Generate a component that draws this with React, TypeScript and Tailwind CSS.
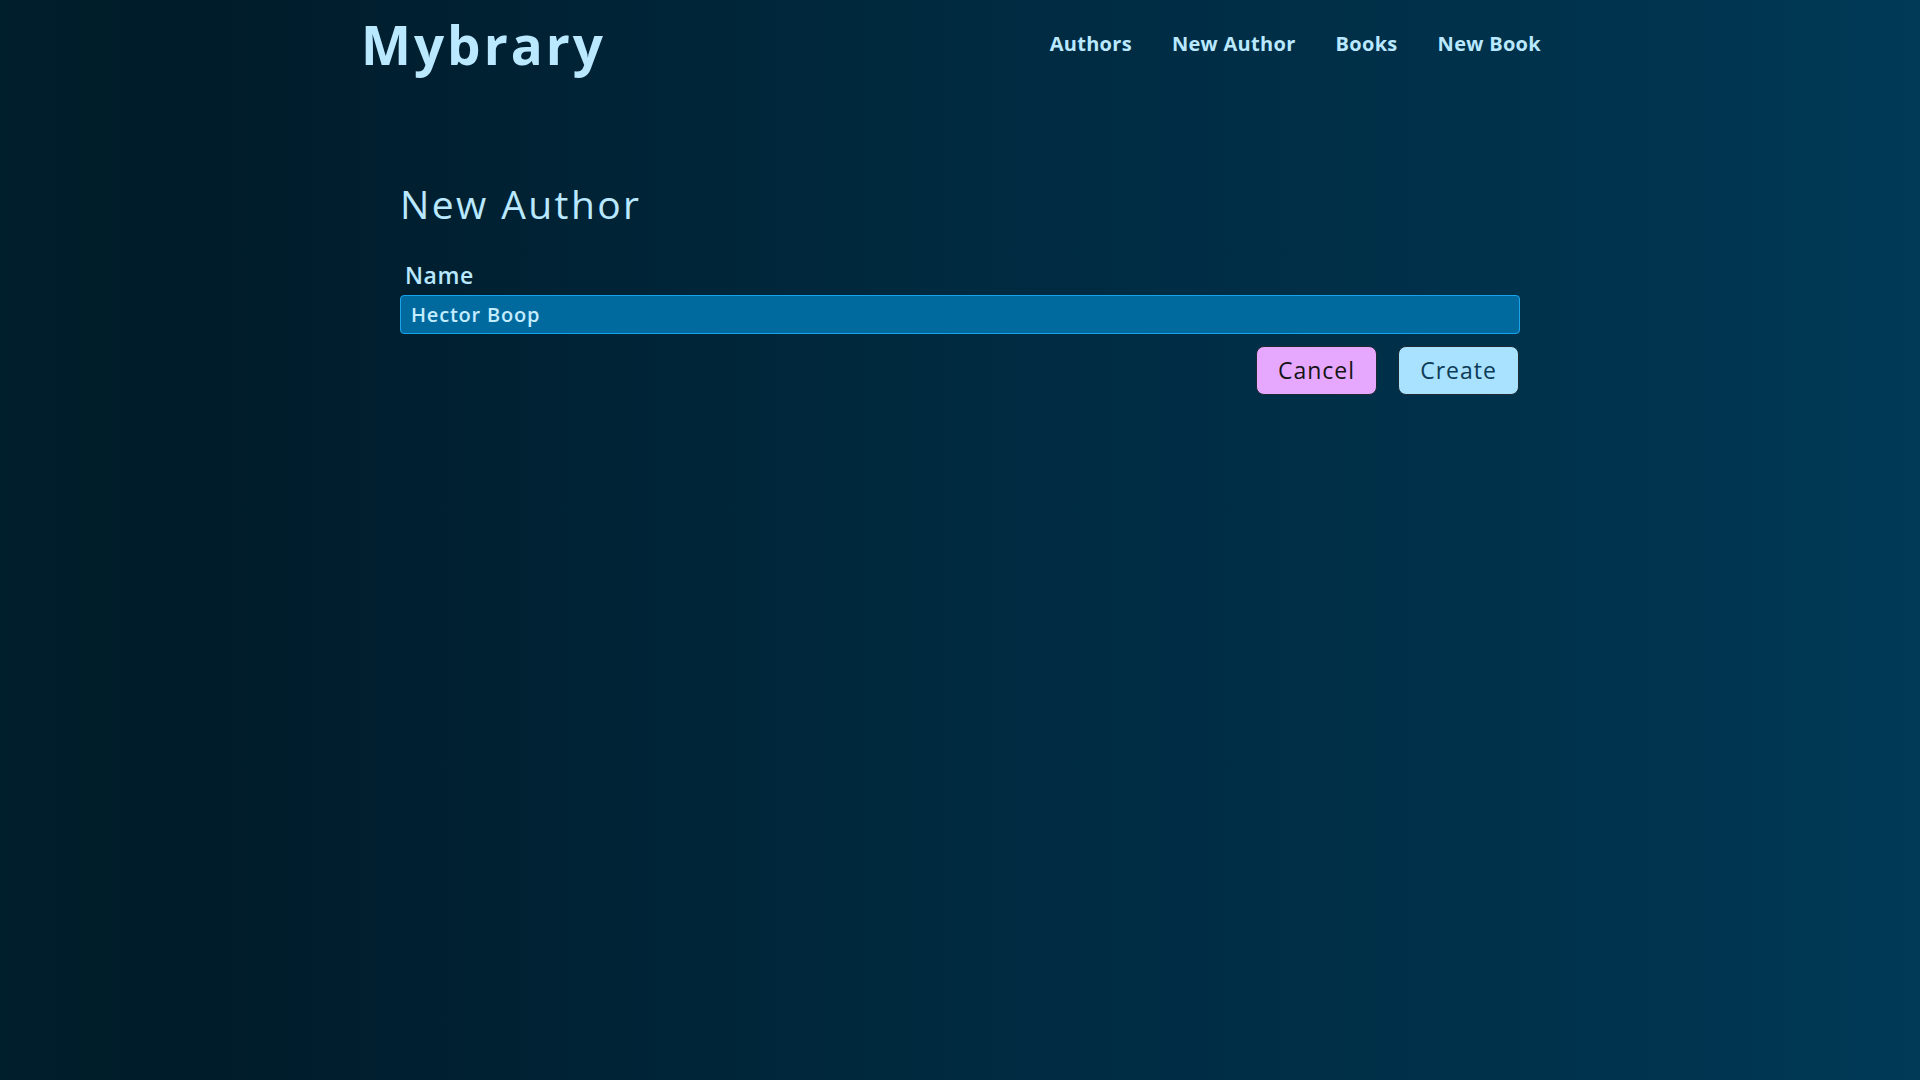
import React from "react";

const links = ["Authors", "New Author", "Books", "New Book"];

const App: React.FC = () => {
  return (
    <div
      className="min-h-screen w-full bg-[linear-gradient(to_right,#001f2c_0%,#001b29_9%,#002a40_50%,#00344f_88%,#003a57_100%)] text-[#b9e8ff]"
      style={{ fontFamily: '"Open Sans", "Noto Sans", sans-serif' }}
    >
      <header className="w-[1190px] mx-auto flex justify-between items-start pt-[10px]">
        <a href="#" className="-ml-[4px] text-[53px] font-bold leading-[70px] tracking-[3px] no-underline">
          Mybrary
        </a>
        <nav className="flex gap-[40px] pr-[14px] pt-[19px]">
          {links.map((l) => (
            <a key={l} href="#" className="text-[20px] font-bold leading-[30px] tracking-[0.3px] no-underline">
              {l}
            </a>
          ))}
        </nav>
      </header>

      <main className="w-[1120px] mx-auto mt-[99px]">
        <h2 className="text-[39px] font-medium leading-[50px] tracking-[2.4px]">New Author</h2>
        <form className="mt-[30px] flex flex-col">
          <label className="text-[23px] font-semibold leading-[32px] tracking-[0.6px] pl-[5px]">Name</label>
          <input
            type="text"
            defaultValue="Hector Boop"
            className="mt-[4px] h-[39px] w-full rounded-[4px] border border-[#18a4ec] bg-[#006a9e] px-[10px] text-[20px] font-semibold tracking-[0.8px] text-[#c4ecff] outline-none"
            style={{ fontFamily: '"Open Sans", "Noto Sans", sans-serif' }}
          />
          <div className="mt-[12px] flex justify-end gap-[21px] pr-[1px]">
            <button
              type="button"
              className="h-[49px] w-[121px] rounded-[8px] border border-[#1b2a33] bg-[#e6a8ff] text-[23px] tracking-[1px] text-[#141414]"
            >
              Cancel
            </button>
            <button
              type="submit"
              className="h-[49px] w-[121px] rounded-[8px] border border-[#1b2a33] bg-[#a8e2ff] text-[23px] tracking-[1px] text-[#0d3b56]"
            >
              Create
            </button>
          </div>
        </form>
      </main>
    </div>
  );
};

export default App;
